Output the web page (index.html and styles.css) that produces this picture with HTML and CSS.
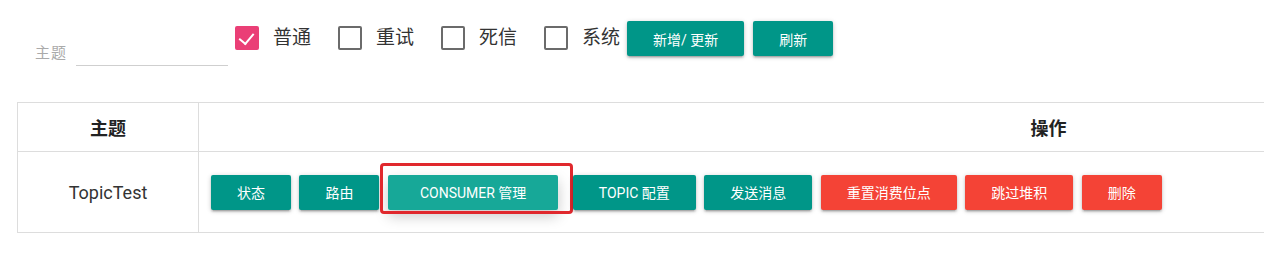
FILE: index.html
```html
<!DOCTYPE html>
<html lang="zh-CN">
<head>
    <meta charset="UTF-8">
    <title>Topic</title>
    <link rel="stylesheet" href="styles.css">
</head>
<body>
    <div class="filter">
        <div class="field">
            <label for="topic">主题</label>
            <input type="text" id="topic">
        </div>
        <label class="check checked"><span class="box"></span>普通</label>
        <label class="check"><span class="box"></span>重试</label>
        <label class="check"><span class="box"></span>死信</label>
        <label class="check last"><span class="box"></span>系统</label>
        <button class="btn">新增/ 更新</button>
        <button class="btn">刷新</button>
    </div>

    <table class="topics">
        <thead>
            <tr>
                <th class="col-name">主题</th>
                <th>操作</th>
            </tr>
        </thead>
        <tbody>
            <tr>
                <td class="col-name">TopicTest</td>
                <td class="actions">
                    <button class="btn">状态</button>
                    <button class="btn">路由</button>
                    <button class="btn hover marked">CONSUMER 管理</button>
                    <button class="btn">TOPIC 配置</button>
                    <button class="btn">发送消息</button>
                    <button class="btn red">重置消费位点</button>
                    <button class="btn red">跳过堆积</button>
                    <button class="btn red">删除</button>
                </td>
            </tr>
        </tbody>
    </table>
</body>
</html>
```

FILE: styles.css
```css
* {
    box-sizing: border-box;
}

body {
    margin: 0;
    background: #fff;
    color: #333;
    font-family: Roboto, "Noto Sans CJK SC", sans-serif;
    overflow: hidden;
}

.filter {
    display: flex;
    align-items: flex-start;
    gap: 7px;
    padding: 21px 0 0 35px;
}

.filter .btn + .btn {
    margin-left: 2px;
}

.field {
    display: flex;
    align-items: flex-end;
    margin-top: 20px;
}

.field label {
    font-size: 15px;
    color: #aaa;
    width: 41px;
    padding-bottom: 4px;
    letter-spacing: 1px;
}

.field input {
    width: 152px;
    height: 20px;
    border: none;
    border-bottom: 1px solid #cfcfcf;
    outline: none;
}

.check {
    display: flex;
    align-items: center;
    margin-top: 5px;
    margin-right: 20px;
    font-size: 19px;
    line-height: 24px;
    color: #333;
}

.check.last {
    margin-right: 0;
}

.check .box {
    width: 24px;
    height: 24px;
    margin-right: 14px;
    border: 2px solid #6b6b6b;
    border-radius: 2px;
    position: relative;
}

.check.checked .box {
    background: #ea3f76;
    border-color: #ea3f76;
}

/* tick */
.check.checked .box::after {
    content: "";
    position: absolute;
    left: 5px;
    top: 2px;
    width: 7px;
    height: 12px;
    border-right: 2px solid #fff;
    border-bottom: 2px solid #fff;
    transform: rotate(40deg);
}

.btn {
    position: relative;
    height: 35px;
    padding: 0 26px;
    border: none;
    border-radius: 2px;
    background: #009688;
    color: #fff;
    font-family: inherit;
    font-size: 14px;
    white-space: nowrap;
    cursor: pointer;
    box-shadow: 0 2px 2px 0 rgba(0, 0, 0, .14), 0 3px 1px -2px rgba(0, 0, 0, .12), 0 1px 5px 0 rgba(0, 0, 0, .2);
}

.btn.red {
    background: #f44336;
}

.btn.hover {
    padding: 0 32px;
    background: #17a898;
    box-shadow: 0 6px 14px 0 rgba(0, 0, 0, .22);
}

/* annotation frame */
.btn.marked::after {
    content: "";
    position: absolute;
    left: -8px;
    right: -15px;
    top: -12px;
    bottom: -4px;
    border: 3px solid #e0282d;
    border-radius: 4px;
}

.topics {
    margin: 36px 0 0 17px;
    width: 1882px;
    border-collapse: collapse;
}

.topics th,
.topics td {
    border: 1px solid #ddd;
    text-align: center;
}

.topics th {
    height: 49px;
    font-size: 18px;
    font-weight: bold;
    color: #222;
}

.topics td {
    height: 81px;
    font-size: 18px;
}

.topics .col-name {
    width: 181px;
}

.topics td.actions {
    text-align: left;
    padding: 0 0 0 12px;
}

.actions .btn {
    margin-right: 4px;
}

.actions .btn.marked {
    margin-right: 10px;
}
```
